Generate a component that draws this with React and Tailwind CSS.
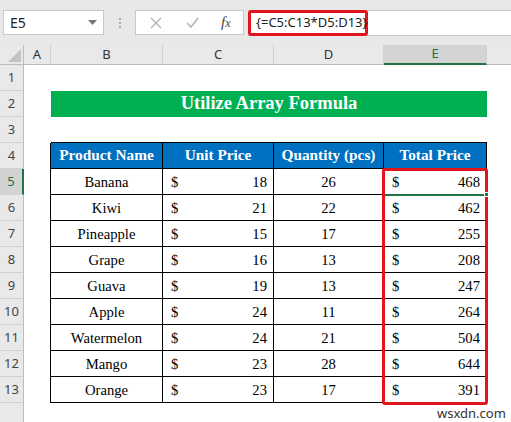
import React from "react";

const rows = [
  ["Banana", 18, 26, 468],
  ["Kiwi", 21, 22, 462],
  ["Pineapple", 15, 17, 255],
  ["Grape", 16, 13, 208],
  ["Guava", 19, 13, 247],
  ["Apple", 24, 11, 264],
  ["Watermelon", 24, 21, 504],
  ["Mango", 23, 28, 644],
  ["Orange", 23, 17, 391],
];

const ui = { fontFamily: '"Noto Sans", "Open Sans", sans-serif' };
const serif = { fontFamily: '"Liberation Serif", "Times New Roman", serif' };

function RowHead({ n, sel }) {
  return (
    <div
      className={
        "flex items-center justify-center text-[13px] border-b border-[#d0d0d0] " +
        (sel
          ? "bg-[#d3d3d3] text-[#217346] border-r-2 border-r-[#217346]"
          : "bg-[#e9e9e9] text-[#444] border-r border-r-[#bcbcbc]")
      }
      style={ui}
    >
      {n}
    </div>
  );
}

function Money({ v }) {
  return (
    <div
      className="flex items-center justify-between pl-2 pr-1.5 text-[14.67px] text-black bg-white border-b border-r border-black"
      style={serif}
    >
      <span>$</span>
      <span>{v}</span>
    </div>
  );
}

function Plain({ v }) {
  return (
    <div
      className="flex items-center justify-center text-[14.67px] text-black bg-white border-b border-r border-black"
      style={serif}
    >
      {v}
    </div>
  );
}

export default function App() {
  const cols = ["A", "B", "C", "D", "E"];
  return (
    <div className="w-[511px] h-[422px] overflow-hidden bg-white relative">
      {/* toolbar */}
      <div className="h-[45px] bg-[#e8e8e8] flex items-start pt-[10px] pl-[3px]">
        <div className="w-[101px] h-[25px] bg-white border border-[#c8c8c8] flex items-center justify-between pl-[6px] pr-[6px]" style={ui}>
          <span className="text-[14px] text-[#222]">E5</span>
          <svg width="9" height="5" viewBox="0 0 9 5"><path d="M0 0h9L4.5 5z" fill="#777" /></svg>
        </div>
        <div className="w-[31px] h-[25px] flex flex-col items-center justify-center gap-[2px]">
          <span className="w-[2px] h-[2px] bg-[#a8a8a8]" />
          <span className="w-[2px] h-[2px] bg-[#a8a8a8]" />
          <span className="w-[2px] h-[2px] bg-[#a8a8a8]" />
        </div>
        <div className="w-[109px] h-[25px] bg-white border border-[#c8c8c8] flex items-center">
          <svg className="ml-[14px]" width="12" height="12" viewBox="0 0 12 12"><path d="M1 1l10 10M11 1L1 11" stroke="#b4b4b4" strokeWidth="1.4" /></svg>
          <svg className="ml-[24px]" width="13" height="11" viewBox="0 0 13 11"><path d="M1 6l4 4 7-9" stroke="#b4b4b4" strokeWidth="1.6" fill="none" /></svg>
          <span className="ml-[22px] text-[15px] italic text-[#444]" style={serif}>f<span className="text-[12px]">x</span></span>
        </div>
        <div className="flex-1 h-[26px] ml-[4px] bg-white border-t border-b border-[#c8c8c8] flex items-center">
          <div className="h-[26px] w-[120px] border-[3px] border-[#e0161c] rounded-[3px] flex items-center pl-[5px]">
            <span className="text-[13px] text-[#222]" style={ui}>{"{=C5:C13*D5:D13}"}</span>
          </div>
        </div>
      </div>

      {/* sheet */}
      <div className="relative">
        <div className="grid grid-cols-[24px_27px_112px_111px_110px_103px_1fr] grid-rows-[20px_repeat(13,26px)_40px]">
          {/* column header */}
          <div className="bg-[#e9e9e9] border-r border-b border-[#bcbcbc] relative">
            <svg className="absolute right-[2px] bottom-[2px]" width="13" height="13" viewBox="0 0 13 13"><path d="M13 0V13H0z" fill="#c2c2c2" /></svg>
          </div>
          {cols.map((c) => (
            <div
              key={c}
              className={
                "flex items-center justify-center text-[13px] border-r border-[#d0d0d0] " +
                (c === "E"
                  ? "bg-[#d3d3d3] text-[#217346] border-b-2 border-b-[#217346]"
                  : "bg-[#e9e9e9] text-[#333] border-b border-b-[#bcbcbc]")
              }
              style={ui}
            >
              {c}
            </div>
          ))}
          <div className="bg-[#e9e9e9] border-b border-[#bcbcbc]" />

          {/* row 1 */}
          <RowHead n={1} />
          <div className="col-span-6 bg-white" />

          {/* row 2 */}
          <RowHead n={2} />
          <div className="bg-white" />
          <div className="col-span-4 bg-[#00b050] flex items-center justify-center text-white font-bold text-[18.5px]" style={serif}>
            Utilize Array Formula
          </div>
          <div className="bg-white" />

          {/* row 3 */}
          <RowHead n={3} />
          <div className="bg-white" />
          <div className="col-span-4 bg-white border-b border-black" />
          <div className="bg-white" />

          {/* row 4 header */}
          <RowHead n={4} />
          <div className="bg-white border-r border-black" />
          {["Product Name", "Unit Price", "Quantity (pcs)", "Total Price"].map((h) => (
            <div
              key={h}
              className="bg-[#0070c0] text-white font-bold text-[15.3px] flex items-center justify-center border-b border-r border-black"
              style={serif}
            >
              {h}
            </div>
          ))}
          <div className="bg-white" />

          {rows.map((r, i) => (
            <React.Fragment key={r[0]}>
              <RowHead n={i + 5} sel={i === 0} />
              <div className="bg-white border-r border-black" />
              <Plain v={r[0]} />
              <Money v={r[1]} />
              <Plain v={r[2]} />
              <Money v={r[3]} />
              <div className="bg-white" />
            </React.Fragment>
          ))}

          {/* tail */}
          <div className="bg-[#e9e9e9] border-r border-[#bcbcbc]" />
          <div className="col-span-6 bg-white" />
        </div>

        {/* red outline */}
        <div className="absolute left-[382px] top-[123px] w-[106px] h-[237px] border-[3px] border-[#e0161c] rounded-[3px] pointer-events-none" />
        {/* selection line + handle */}
        <div className="absolute left-[385px] top-[149px] w-[100px] h-[2px] bg-[#217346]" />
        <div className="absolute left-[484px] top-[147px] w-[5px] h-[5px] bg-[#217346] border border-white" />
        {/* watermark */}
        <div className="absolute left-[437px] top-[359px] text-[13px] text-[#333]" style={ui}>wsxdn.com</div>
      </div>
    </div>
  );
}
